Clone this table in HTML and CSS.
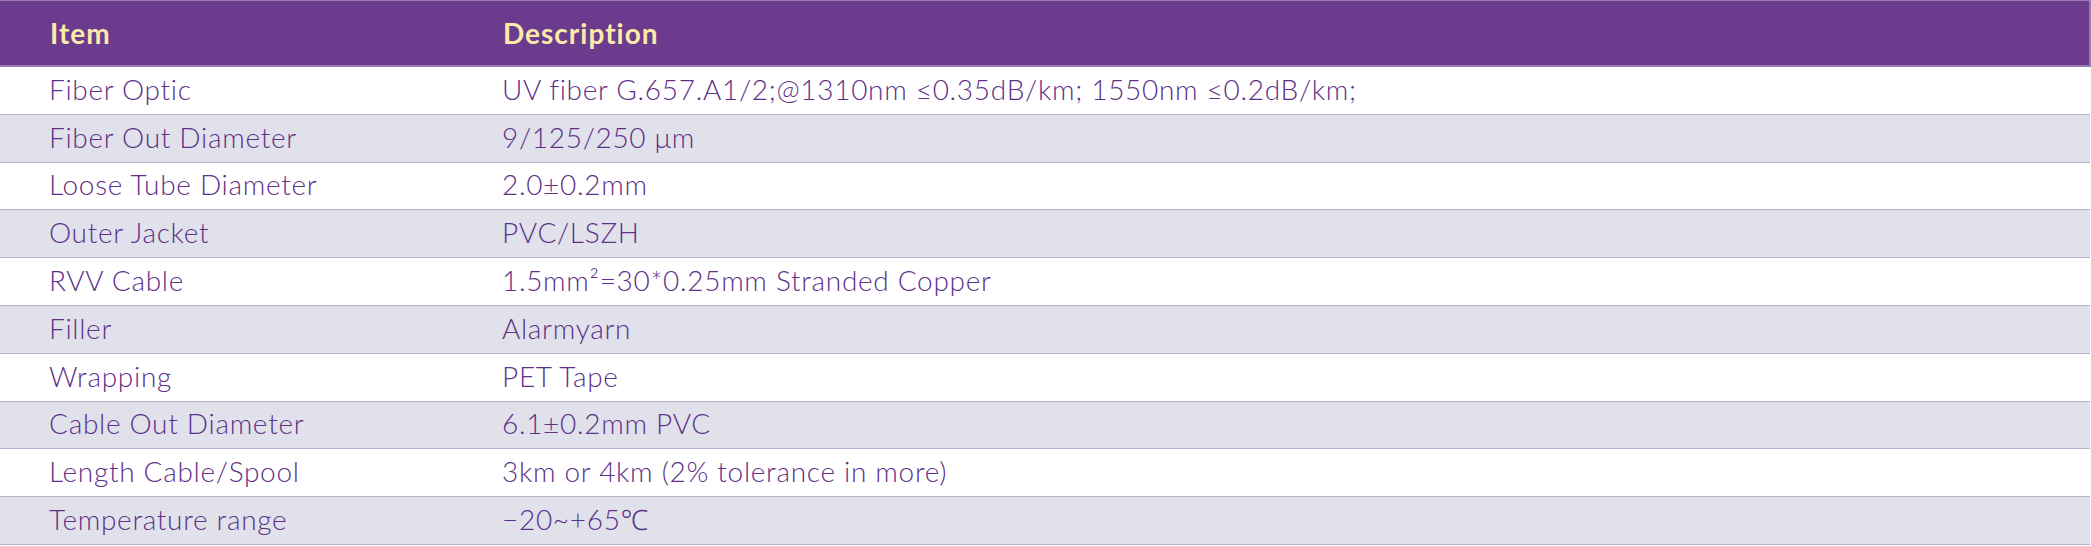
FILE: index.html
```html
<!DOCTYPE html>
<html>
<head>
<meta charset="utf-8">
<link rel="stylesheet" href="styles.css">
</head>
<body>
<table class="spec">
  <thead>
    <tr><th class="c1">Item</th><th class="c2">Description</th></tr>
  </thead>
  <tbody>
    <tr><td>Fiber Optic</td><td>UV fiber G.657.A1/2;@1310nm ≤0.35dB/km; 1550nm ≤0.2dB/km;</td></tr>
    <tr><td>Fiber Out Diameter</td><td>9/125/250 μm</td></tr>
    <tr><td>Loose Tube Diameter</td><td>2.0±0.2mm</td></tr>
    <tr><td>Outer Jacket</td><td>PVC/LSZH</td></tr>
    <tr><td>RVV Cable</td><td>1.5mm²=30*0.25mm Stranded Copper</td></tr>
    <tr><td>Filler</td><td>Alarmyarn</td></tr>
    <tr><td>Wrapping</td><td>PET Tape</td></tr>
    <tr><td>Cable Out Diameter</td><td>6.1±0.2mm PVC</td></tr>
    <tr><td>Length Cable/Spool</td><td>3km or 4km (2% tolerance in more)</td></tr>
    <tr><td>Temperature range</td><td>−20~+65℃</td></tr>
  </tbody>
</table>
</body>
</html>
```
FILE: styles.css
```css
html, body {
  margin: 0;
  padding: 0;
  background: #ffffff;
}
.spec {
  width: 2091px;
  border-collapse: collapse;
  font-family: Lato, "Noto Sans", sans-serif;
  table-layout: fixed;
}
.spec th {
  height: 63px;
  padding: 0 0 1px 50px;
  background: #6c3b8e;
  color: #fbeaa9;
  font-weight: 700;
  font-size: 28px;
  text-align: left;
  letter-spacing: 1px;
  border-top: 1px solid #9a7db3;
  border-bottom: 2px solid #9a7db3;
}
.spec th.c1 { width: 403px; }
.spec th.c2 { border-right: 2px solid #9a7db3; }
.spec td {
  height: 43.8px;
  padding: 0 0 3px 49px;
  color: #5d3187;
  font-weight: 300;
  font-size: 28px;
  letter-spacing: 0.7px;
  border-bottom: 1px solid #b5b3cc;
  white-space: nowrap;
}
.spec tbody tr:nth-child(even) td {
  background: #e1e1ec;
}
```
